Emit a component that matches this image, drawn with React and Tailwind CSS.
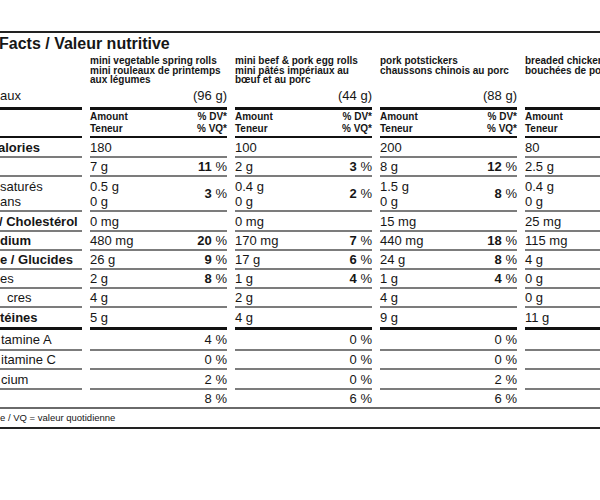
import React from 'react';

const products = [
  {
    name: ['mini vegetable spring rolls', 'mini rouleaux de printemps', 'aux légumes'],
    serving: '(96 g)',
    cal: '180',
    fat: ['7 g', '11'],
    sat: ['0.5 g', '0 g', '3'],
    chol: '0 mg',
    sod: ['480 mg', '20'],
    carb: ['26 g', '9'],
    fib: ['2 g', '8'],
    sug: '4 g',
    prot: '5 g',
    vit: ['4', '0', '2', '8'],
  },
  {
    name: ['mini beef & pork egg rolls', 'mini pâtés impériaux au', 'bœuf et au porc'],
    serving: '(44 g)',
    cal: '100',
    fat: ['2 g', '3'],
    sat: ['0.4 g', '0 g', '2'],
    chol: '0 mg',
    sod: ['170 mg', '7'],
    carb: ['17 g', '6'],
    fib: ['1 g', '4'],
    sug: '2 g',
    prot: '4 g',
    vit: ['0', '0', '0', '6'],
  },
  {
    name: ['pork potstickers', 'chaussons chinois au porc'],
    serving: '(88 g)',
    cal: '200',
    fat: ['8 g', '12'],
    sat: ['1.5 g', '0 g', '8'],
    chol: '15 mg',
    sod: ['440 mg', '18'],
    carb: ['24 g', '8'],
    fib: ['1 g', '4'],
    sug: '4 g',
    prot: '9 g',
    vit: ['0', '0', '2', '6'],
  },
  {
    name: ['breaded chicken bites', 'bouchées de poulet panées'],
    serving: '',
    cal: '80',
    fat: ['2.5 g', ''],
    sat: ['0.4 g', '0 g', ''],
    chol: '25 mg',
    sod: ['115 mg', ''],
    carb: ['4 g', ''],
    fib: ['0 g', ''],
    sug: '0 g',
    prot: '11 g',
    vit: ['', '', '', ''],
  },
];

const grid = 'grid grid-cols-[82px_137px_137px_137px_137px] gap-x-2';

const Pct = ({ n, bold = true }) =>
  n ? (
    <span className="whitespace-nowrap">
      <span className={bold ? 'font-bold' : ''}>{n}</span> %
    </span>
  ) : null;

// one line of the table: label cell + a cell per product
const Row = ({ h, line, label, labelClass = '', render }) => (
  <div className={grid}>
    <div className={`${h} ${line} flex items-center whitespace-nowrap overflow-hidden ${labelClass}`}>{label}</div>
    {products.map((p, i) => (
      <div key={i} className={`${h} ${line} flex items-center justify-between whitespace-nowrap`}>
        {render(p)}
      </div>
    ))}
  </div>
);

const thin = 'border-b-2 border-[#7c7c7c]';

export default function App() {
  return (
    <div
      className="w-[600px] h-[500px] overflow-hidden bg-white text-[#161616] text-[13px] leading-none"
      style={{ fontFamily: '"Liberation Sans", Arial, sans-serif' }}
    >
      <div className="pt-[31px]">
        <div className="border-t-2 border-[#222] w-[662px]">
          <div className="h-[22px] flex items-center text-[16px] font-bold -ml-[1px]">
            Facts / Valeur nutritive
          </div>

          {/* product names + serving */}
          <div className={grid}>
            <div className="h-[55px] border-b-[3px] border-[#111] flex items-end pb-[5px]">aux</div>
            {products.map((p, i) => (
              <div key={i} className="h-[55px] border-b-[3px] border-[#111] flex flex-col justify-between pt-[1px] pb-[5px]">
                <div className="text-[10px] font-bold leading-[9.5px] whitespace-nowrap">
                  {p.name.map((n) => (
                    <div key={n}>{n}</div>
                  ))}
                </div>
                <div className="text-right">{p.serving}</div>
              </div>
            ))}
          </div>

          {/* amount / % DV header */}
          <div className={grid}>
            <div className="h-[28px] border-b-2 border-[#111]" />
            {products.map((p, i) => (
              <div key={i} className="h-[28px] border-b-2 border-[#111] flex justify-between items-center text-[10px] font-bold leading-[12px]">
                <div>
                  <div>Amount</div>
                  <div>Teneur</div>
                </div>
                <div className="text-right">
                  <div>% DV*</div>
                  <div>% VQ*</div>
                </div>
              </div>
            ))}
          </div>

          <Row h="h-[20px]" line={thin} label="alories" labelClass="font-bold -ml-[2px]" render={(p) => <span>{p.cal}</span>} />
          <Row
            h="h-[19px]"
            line={thin}
            label=""
            render={(p) => (
              <>
                <span>{p.fat[0]}</span>
                <Pct n={p.fat[1]} />
              </>
            )}
          />
          <Row
            h="h-[35px]"
            line={thin}
            label={
              <div className="leading-[15px]">
                <div>saturés</div>
                <div>ans</div>
              </div>
            }
            render={(p) => (
              <>
                <div className="leading-[15px]">
                  <div>{p.sat[0]}</div>
                  <div>{p.sat[1]}</div>
                </div>
                <Pct n={p.sat[2]} />
              </>
            )}
          />
          <Row h="h-[20px]" line={thin} label="/ Cholestérol" labelClass="font-bold -ml-[1px]" render={(p) => <span>{p.chol}</span>} />
          <Row
            h="h-[19px]"
            line={thin}
            label="dium"
            labelClass="font-bold"
            render={(p) => (
              <>
                <span>{p.sod[0]}</span>
                <Pct n={p.sod[1]} />
              </>
            )}
          />
          <Row
            h="h-[19px]"
            line={thin}
            label="e / Glucides"
            labelClass="font-bold"
            render={(p) => (
              <>
                <span>{p.carb[0]}</span>
                <Pct n={p.carb[1]} />
              </>
            )}
          />
          <Row
            h="h-[19px]"
            line={thin}
            label="es"
            render={(p) => (
              <>
                <span>{p.fib[0]}</span>
                <Pct n={p.fib[1]} />
              </>
            )}
          />
          <Row h="h-[19px]" line={thin} label="cres" labelClass="pl-[7px]" render={(p) => <span>{p.sug}</span>} />
          <Row h="h-[22px]" line="border-b-[3px] border-[#111]" label="téines" labelClass="font-bold" render={(p) => <span>{p.prot}</span>} />

          {['tamine A', 'itamine C', 'cium'].map((lab, k) => (
            <Row
              key={lab}
              h={k === 0 ? 'h-[21px]' : k === 1 ? 'h-[19px]' : 'h-[20px]'}
              line={thin}
              label={lab}
              labelClass="pl-[1px]"
              render={(p) => (
                <>
                  <span />
                  <Pct n={p.vit[k]} bold={false} />
                </>
              )}
            />
          ))}
          <div className="border-b-2 border-[#6a6a6a]">
            <Row
              h="h-[17px]"
              line=""
              label=""
              render={(p) => (
                <>
                  <span />
                  <Pct n={p.vit[3]} bold={false} />
                </>
              )}
            />
          </div>

          <div className="h-[20px] border-b-2 border-[#222] flex items-center text-[9.5px]">e / VQ = valeur quotidienne</div>
        </div>
      </div>
    </div>
  );
}
